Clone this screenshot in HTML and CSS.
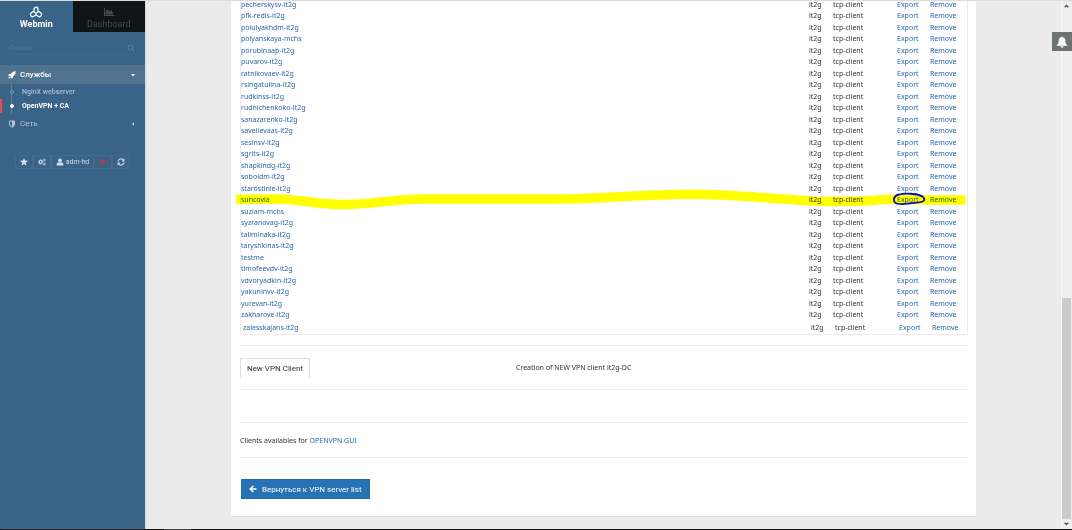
FILE: index.html
```
<!DOCTYPE html>
<html lang="ru">
<head>
<meta charset="utf-8">
<title>Webmin</title>
<link rel="stylesheet" href="styles.css">
</head>
<body>
<div class="app">
  <aside class="sidebar">
    <nav class="tabs">
      <a class="tab tab-active" href="#webmin">
        <svg class="tab-icon" viewBox="0 0 24 24" fill="none" stroke="currentColor" stroke-width="2.600"><path d="M8 12V6.500a4 4 0 0 1 8 0V12l-4 2.500zM8 10l-4.500 3a4 4 0 0 0 3.500 8l5-3v-3.500M16 10l4.500 3a4 4 0 0 1-3.500 8l-5-3"/></svg>
        <span>Webmin</span>
      </a>
      <a class="tab" href="#dashboard">
        <svg class="tab-icon" viewBox="0 0 24 24" fill="currentColor"><path d="M2 4h2v14h19v2H2zM5 17v-6l4-5 4 5 4-3 4 9z"/></svg>
        <span>Dashboard</span>
      </a>
    </nav>
    <form class="search">
      <input class="search-input" type="search" placeholder="Поиск" aria-label="Поиск">
      <svg class="search-icon" viewBox="0 0 16 16" fill="none" stroke="currentColor" stroke-width="2"><circle cx="7" cy="7" r="5"/><path d="M11 11l4 4"/></svg>
    </form>
    <nav class="menu">
      <a class="menu-item menu-open" href="#services">
        <svg class="menu-icon" viewBox="0 0 16 16" fill="currentColor"><path d="M15.500.5C10 .5 7.500 3 5.500 6H2.500L.5 9.500l3.500.3 2.200 2.200.3 3.500L10 13.500v-3c3-2 5.500-4.500 5.500-10zM3 11c-1.500.5-2 2.500-2 4 1.500 0 3.500-.5 4-2z"/></svg>
        <span class="menu-label">Службы</span>
        <svg class="caret" viewBox="0 0 6 6" fill="currentColor"><path d="M1 2h4L3 4.500z"/></svg>
      </a>
      <div class="submenu">
        <a class="sub-item" href="#nginx"><i class="dot"></i>NginX webserver</a>
        <a class="sub-item sub-active" href="#openvpn"><i class="dot"></i>OpenVPN + CA</a>
      </div>
      <a class="menu-item" href="#network">
        <svg class="menu-icon" viewBox="0 0 16 16" fill="none" stroke="currentColor" stroke-width="2"><path d="M3 2h10v6c0 3-2 5-5 6.500C5 13 3 11 3 8z"/><path d="M8 2h5v6c0 3-2 5-5 6.500z" fill="currentColor" stroke="none"/></svg>
        <span class="menu-label">Сеть</span>
        <svg class="caret" viewBox="0 0 6 6" fill="currentColor"><path d="M4 1v4L2 3z"/></svg>
      </a>
    </nav>
    <div class="tools">
      <button class="tool" aria-label="Favorites"><svg class="tool-icon" viewBox="0 0 16 16" fill="currentColor"><path d="M8 0l2.300 5 5.500.6-4 3.700 1 5.500L8 12.200l-4.800 2.600 1-5.500-4-3.700L5.700 5z"/></svg></button>
      <button class="tool" aria-label="Settings"><svg class="tool-icon" viewBox="0 0 16 16" fill="none" stroke="currentColor"><circle cx="5.500" cy="8" r="3" stroke-width="2.400"/><circle cx="5.500" cy="8" r="4.700" stroke-width="1.500" stroke-dasharray="2 1.700"/><circle cx="13" cy="3.800" r="1.700" stroke-width="1.800"/><circle cx="13" cy="12.200" r="1.700" stroke-width="1.800"/></svg></button>
      <button class="tool"><svg class="tool-icon" viewBox="0 0 16 16" fill="currentColor"><circle cx="8" cy="5" r="4"/><path d="M1 15c0-4 1.500-6 4-6.500 2 1.500 4 1.500 6 0 2.500.5 4 2.500 4 6.500z"/></svg>adm-hd</button>
      <button class="tool tool-exit" aria-label="Logout"><svg class="tool-icon" viewBox="0 0 16 16" fill="currentColor"><path d="M7 2H4Q1 2 1 5v6q0 3 3 3h3v-2H4q-1 0-1-1V5q0-1 1-1h3z"/><path d="M5 6h4V3l6 5-6 5v-3H5z"/></svg></button>
      <button class="tool" aria-label="Refresh"><svg class="tool-icon" viewBox="0 0 16 16" fill="none" stroke="currentColor" stroke-width="2.200"><path d="M2 7a6 6 0 0 1 11-2.500M14 9a6 6 0 0 1-11 2.500"/><path d="M15 1v6H9zM1 15V9h6z" fill="currentColor" stroke="none"/></svg></button>
    </div>
  </aside>

  <main class="content">
    <section class="card">
      <div class="clients">
        <table class="client-table">
          <colgroup><col><col class="col-server"><col class="col-type"><col class="col-export"><col class="col-remove"></colgroup>
          <tbody id="clients"></tbody>
        </table>
      </div>
      <hr class="rule rule-tight">
      <div class="new-client">
        <button class="btn-new">New VPN Client</button>
        <span class="new-note">Creation of NEW VPN client it2g-DC</span>
      </div>
      <hr class="rule">
      <hr class="rule rule-gap">
      <p class="gui-note">Clients availables for <a class="link" href="#gui">OPENVPN GUI</a></p>
      <hr class="rule rule-tight">
      <button class="btn-back"><svg class="back-icon" viewBox="0 0 16 16" fill="none" stroke="currentColor" stroke-width="3"><path d="M8.500 2L2.500 8l6 6M3 8h12"/></svg>Вернуться к VPN server list</button>
    </section>
  </main>

  <div class="scrollbar">
    <svg class="scroll-arrow" viewBox="0 0 10 10" fill="none" stroke="currentColor" stroke-width="1.500"><path d="M3 6.500l2-2 2 2"/></svg>
    <div class="scroll-track"><div class="scroll-thumb"></div></div>
    <svg class="scroll-arrow" viewBox="0 0 10 10" fill="none" stroke="currentColor" stroke-width="1.500"><path d="M3 3.500l2 2 2-2"/></svg>
  </div>
  <button class="bell" aria-label="Notifications"><svg class="bell-icon" viewBox="0 0 16 16" fill="currentColor"><path d="M7 1.500a1 1 0 0 1 2 0c2.500.7 3.500 2.500 3.500 5 0 3 1 4.500 2.500 5.500v1H1v-1c1.500-1 2.500-2.500 2.500-5.500 0-2.500 1-4.300 3.500-5zM6 13.500h4a2 2 0 0 1-4 0z"/></svg></button>
</div>
<div class="bottom-bar"><div class="bottom-mark"></div></div>

<template id="marker">
  <svg class="marker" viewBox="236 186 731 26" preserveAspectRatio="none" fill="none"><path stroke="#ffff00" stroke-width="9.500" d="M236 198.500L280 198C305 199 318 203.500 345 203.500S385 199 420 198L570 198C620 197 640 193.500 690 193.300S790 200 830 200.500S875 198 895 198.300L930 199L965.500 199"/></svg>
  <svg class="ring" viewBox="0 0 34 14" fill="none" stroke="#0a0ad0" stroke-width="1.800" stroke-linecap="round"><path d="M30 4C24 1.500 13 1 7 2.500C2 3.500 .8 8 3 10.500C5 13 12 12 17 11.500C22 10.500 30 11 32 8.500C33.500 6 30 3.500 23 2"/></svg>
</template>
<script src="app.js"></script>
</body>
</html>
```
FILE: styles.css
```
* { box-sizing: border-box; }
body {
  margin: 0;
  height: 100vh;
  display: flex;
  flex-direction: column;
  overflow: hidden;
  background: #ebebeb;
  border-top: 1px solid #dcdcdc;
  font: 7px/12px Roboto, sans-serif;
  color: #333;
}
a { text-decoration: none; }
button, input { font: inherit; }
svg { flex: none; }
.app { position: relative; flex: 1; min-height: 0; display: flex; }
.bottom-bar { flex: none; height: 1px; padding-left: 164px; background: #111; }
.bottom-mark { width: 27px; height: 1px; background: #444; }

.sidebar { flex: none; width: 145px; background: #396487; box-shadow: 0 0 2px #8888; color: #c4d0e0; }
.tabs { display: flex; height: 31px; }
.tab { flex: 1; display: flex; flex-direction: column; align-items: center; padding-top: 5px; background: #0f1516; color: #434b50; font-size: 9px; }
.tab-active { background: none; color: #fff; font-weight: 700; }
.tab-icon { width: 12px; height: 12px; }
.search { display: flex; align-items: center; height: 14px; margin: 9px 5px 0; padding: 0 5px 0 4px; border-bottom: 1px solid #41698d; color: #5d81a2; }
.search-input { flex: 1; min-width: 0; padding: 0; border: 0; outline: 0; background: none; font-size: 8px; }
.search-input::placeholder { color: #517799; }
.search-icon { width: 8px; height: 8px; }
.menu { margin-top: 10px; }
.menu-item { display: flex; align-items: center; gap: 4px; height: 19px; padding: 0 9px 0 8px; color: #b4c4d6; font-size: 8px; }
.menu-open { background: #50738f; color: #fff; font-weight: 500; }
.menu-icon { width: 8px; height: 8px; }
.menu-label { flex: 1; }
.caret { width: 6px; height: 6px; }
.submenu { padding-bottom: 1px; background: linear-gradient(#5f819e, #5f819e) 11px 0 / 1px 100% no-repeat; }
.sub-item { display: flex; align-items: center; gap: 8px; height: 14px; padding-left: 10px; color: #a9bcd0; font-weight: 500; }
.sub-active { border-left: 2px solid #ef4b45; padding-left: 8px; color: #fff; font-weight: 700; }
.submenu .sub-item:first-child { height: 15px; }
.dot { width: 4px; height: 4px; border: 1px solid #7f9bb4; border-radius: 50%; background: #396487; }
.sub-active .dot { background: #fff; border-color: #fff; }
.tools { display: flex; justify-content: center; margin-top: 22px; }
.tool { display: flex; align-items: center; gap: 2px; height: 14px; padding: 0 4px; border: 1px solid #416c90; background: none; color: #d3dcec; }
.tool-exit { color: #c0393f; }
.tool-icon { width: 8px; height: 8px; }

.content { flex: 1; min-width: 0; display: flex; flex-direction: column; justify-content: flex-end; overflow: hidden; padding: 0 85px 12px 86px; font-family: "Noto Sans", Roboto, sans-serif; }
.card { flex: none; padding: 0 8px 17px 9px; background: #fff; border-bottom: 1px solid #dedede; }
.clients { border: 1px solid #ececec; border-top: 0; }
.client-table { width: 100%; table-layout: fixed; border-collapse: collapse; }
.col-server { width: 24px; }
.col-type { width: 64px; }
.col-export { width: 33px; }
.col-remove { width: 37px; }
.client-table td { height: 12px; padding: 0; line-height: 11px; white-space: nowrap; }
.client-table tr:nth-child(even) td { height: 11px; }
.client-table tr:last-child td { height: 14px; padding-left: 2px; }
.link { color: #2a66ae; }
.marked { position: relative; }
.marker { position: absolute; left: -5px; top: -7px; width: calc(100% + 5px); height: 26px; mix-blend-mode: multiply; pointer-events: none; }
.ring { position: absolute; right: 41px; top: -2px; width: 34px; height: 14px; pointer-events: none; }
.rule { margin: 11px 0 0; border: 0; border-top: 1px solid #f0f0f0; }
.rule-tight { margin-top: 10px; }
.new-client { display: flex; align-items: center; padding-top: 12px; }
.btn-new { width: 70px; height: 20px; padding: 0; border: 1px solid #dedede; border-bottom: 0; background: #fff; color: #333; font: 8px Roboto, sans-serif; }
.new-note { margin-left: 206px; }
.rule-gap { margin-top: 32px; }
.gui-note { margin: 12px 0 0; }
.btn-back { display: flex; align-items: center; gap: 5px; height: 20px; margin: 21px 1px 0; padding: 0 7px; border: 1px solid #2368a8; background: #2771b5; color: #fff; font: 8px Roboto, sans-serif; }
.back-icon { width: 8px; height: 8px; }

.scrollbar { flex: none; display: flex; flex-direction: column; width: 11px; padding-right: 1px; border-left: 1px solid #fafafa; background: #eeeeee; color: #555; }
.scroll-arrow { width: 9px; height: 10px; }
.scroll-track { flex: 1; display: flex; flex-direction: column; justify-content: flex-end; }
.scroll-thumb { height: 43.5%; background: #cbcbcb; }
.bell { position: absolute; right: 0; top: 31px; width: 20px; height: 19px; padding: 0; display: grid; place-items: center; border: 0; background: #6d7272; color: #fff; }
.bell-icon { width: 12px; height: 12px; }
```
FILE: app.js
```
const clients = [
  "pecherskysv-it2g", "pfk-redis-it2g", "polulyakhdm-it2g", "polyanskaya-mchs",
  "porubinaap-it2g", "puvarov-it2g", "ratnikovaev-it2g", "rsingatulina-it2g",
  "rudkinss-it2g", "rudnichenkoko-it2g", "sanazarenko-it2g", "savelievaas-it2g",
  "sesinsv-it2g", "sgrits-it2g", "shapkindg-it2g", "soboldm-it2g",
  "starostinie-it2g", "suncovia", "suziam-mchs", "syzranovag-it2g",
  "taliminaka-it2g", "taryshkinas-it2g", "testme", "timofeevdv-it2g",
  "vdvoryadkin-it2g", "yakuninvv-it2g", "yurevan-it2g", "zakharove-it2g",
  "zalesskajans-it2g"
];
const body = document.getElementById("clients");
for (const name of clients) {
  const row = body.insertRow();
  row.innerHTML =
    `<td><a class="link" href="#${name}">${name}</a></td><td>it2g</td><td>tcp-client</td>` +
    `<td><a class="link" href="#export">Export</a></td><td><a class="link" href="#remove">Remove</a></td>`;
  if (name === "suncovia") {
    row.className = "marked";
    row.lastElementChild.append(document.getElementById("marker").content.cloneNode(true));
  }
}
```
